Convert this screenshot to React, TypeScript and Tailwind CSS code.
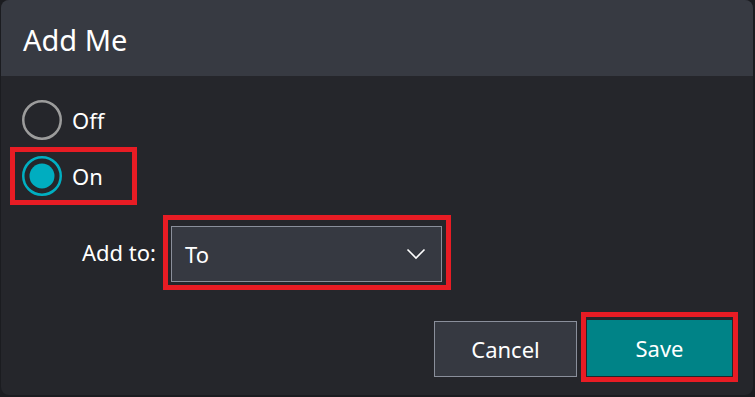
import React, { useState } from 'react'

const font = { fontFamily: '"Noto Sans", "Open Sans", sans-serif' }

const Radio: React.FC<{ checked: boolean }> = ({ checked }) => (
  <svg width="40" height="40" viewBox="0 0 40 40" className="shrink-0">
    <circle
      cx="20"
      cy="20"
      r="18.75"
      fill="none"
      stroke={checked ? '#00afc2' : '#9c9c9c'}
      strokeWidth="2.5"
    />
    {checked && <circle cx="20" cy="20" r="12.5" fill="#00adc0" />}
  </svg>
)

export default function App() {
  const [on, setOn] = useState(true)

  return (
    <div className="w-[755px] h-[397px] bg-[#1b1c20] text-white" style={font}>
      <div className="ml-[1px] w-[752px] h-[395px] rounded-[8px] overflow-hidden bg-[#25262b] flex flex-col">
        {/* Header */}
        <div className="h-[76px] shrink-0 bg-[#373a42] pl-[22px] pt-[2px] flex items-center text-[29px] leading-none">
          Add Me
        </div>

        {/* Body */}
        <div className="flex-1 flex flex-col pl-[9px] pr-[15px] pt-[24px]">
          <div
            className="ml-[12px] h-[40px] flex items-center gap-[10px] text-[22px] cursor-pointer"
            onClick={() => setOn(false)}
          >
            <Radio checked={!on} />
            <span>Off</span>
          </div>

          <div
            className="mt-[7px] w-[127px] h-[58px] border-[5px] border-[#e81c24] flex items-center pl-[7px] gap-[10px] text-[22px] cursor-pointer"
            onClick={() => setOn(true)}
          >
            <Radio checked={on} />
            <span>On</span>
          </div>

          <div className="mt-[10px] flex items-center">
            <span className="ml-[72px] w-[81px] text-[22px]">Add to:</span>
            <div className="w-[288px] h-[75px] border-[5px] border-[#e81c24] pl-[3px] pt-[6px] pr-[4px] pb-[3px]">
              <div className="h-[56px] w-full border border-[#8a8f9b] bg-[#363941] flex items-center justify-between pl-[13px] pr-[15px] text-[22px]">
                <span>To</span>
                <svg width="20" height="12" viewBox="0 0 20 12">
                  <polyline points="1.5,1.5 10,10 18.5,1.5" fill="none" stroke="#ffffff" strokeWidth="1.6" />
                </svg>
              </div>
            </div>
          </div>

          <div className="mt-[22px] flex justify-end items-start gap-[4px]">
            <button className="mt-[9px] w-[143px] h-[56px] border border-[#8a8f9b] bg-[#363941] text-[22px] text-white">
              Cancel
            </button>
            <div className="w-[157px] h-[70px] border-[5px] border-[#e81c24] pt-[3px] px-[1px] pb-[1px]">
              <button className="w-full h-full bg-[#008387] text-[22px] text-white">Save</button>
            </div>
          </div>
        </div>
      </div>
    </div>
  )
}
